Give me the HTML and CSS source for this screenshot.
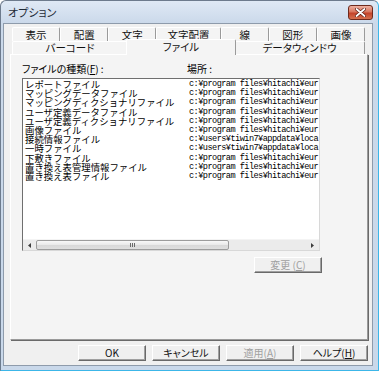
FILE: index.html
```html
<!DOCTYPE html>
<html lang="ja">
<head>
    <meta charset="UTF-8">
    <title>オプション</title>
    <link rel="stylesheet" href="styles.css">
</head>
<body>

<div class="window">
    <div class="titlebar">
        <span class="title">オプション</span>
        <span class="close">
            <svg width="11" height="9" viewBox="0 0 11 9">
                <path d="M1.5 1 L9.5 8 M9.5 1 L1.5 8" stroke="#5a1a10" stroke-width="3.2" stroke-linecap="round"/>
                <path d="M1.5 1 L9.5 8 M9.5 1 L1.5 8" stroke="#fff" stroke-width="1.8" stroke-linecap="round"/>
            </svg>
        </span>
    </div>

    <div class="client">
        <div class="tabrow back">
            <div class="tab">表示</div>
            <div class="tab">配置</div>
            <div class="tab">文字</div>
            <div class="tab wide">文字配置</div>
            <div class="tab">線</div>
            <div class="tab">図形</div>
            <div class="tab">画像</div>
        </div>
        <div class="tabrow front">
            <div class="tab barcode">バーコード</div>
            <div class="tab file current">ファイル</div>
            <div class="tab datawin">データウィンドウ</div>
        </div>

        <div class="panel">
            <div class="labels">
                <span class="lbl-type">ファイルの種類(<u>F</u>) :</span>
                <span class="lbl-loc">場所 :</span>
            </div>
            <div class="listbox">
                <div class="rows">
                    <div class="row"><span class="name">レポートファイル</span><span class="path">c:¥program files¥hitachi¥eur</span></div>
                    <div class="row"><span class="name">マッピングデータファイル</span><span class="path">c:¥program files¥hitachi¥eur</span></div>
                    <div class="row"><span class="name">マッピングディクショナリファイル</span><span class="path">c:¥program files¥hitachi¥eur</span></div>
                    <div class="row"><span class="name">ユーザ定義データファイル</span><span class="path">c:¥program files¥hitachi¥eur</span></div>
                    <div class="row"><span class="name">ユーザ定義ディクショナリファイル</span><span class="path">c:¥program files¥hitachi¥eur</span></div>
                    <div class="row"><span class="name">画像ファイル</span><span class="path">c:¥program files¥hitachi¥eur</span></div>
                    <div class="row"><span class="name">接続情報ファイル</span><span class="path">c:¥users¥tiwin7¥appdata¥loca</span></div>
                    <div class="row"><span class="name">一時ファイル</span><span class="path">c:¥users¥tiwin7¥appdata¥loca</span></div>
                    <div class="row"><span class="name">下敷きファイル</span><span class="path">c:¥program files¥hitachi¥eur</span></div>
                    <div class="row"><span class="name">置き換え表管理情報ファイル</span><span class="path">c:¥program files¥hitachi¥eur</span></div>
                    <div class="row"><span class="name">置き換え表ファイル</span><span class="path">c:¥program files¥hitachi¥eur</span></div>
                </div>
                <div class="hscroll">
                    <span class="arrow">
                        <svg width="3" height="5" viewBox="0 0 3 5"><path d="M3 0 L0 2.5 L3 5 Z" fill="#3c3c3c"/></svg>
                    </span>
                    <span class="thumb"><span class="grip"></span></span>
                    <span class="track"></span>
                    <span class="arrow">
                        <svg width="3" height="5" viewBox="0 0 3 5"><path d="M0 0 L3 2.5 L0 5 Z" fill="#3c3c3c"/></svg>
                    </span>
                </div>
            </div>
            <div class="change-row">
                <button class="btn disabled">変更 (<u>C</u>)</button>
            </div>
        </div>

        <div class="buttons">
            <button class="btn">OK</button>
            <button class="btn">キャンセル</button>
            <button class="btn disabled">適用(<u>A</u>)</button>
            <button class="btn">ヘルプ(<u>H</u>)</button>
        </div>
    </div>
</div>

</body>
</html>
```

FILE: styles.css
```css
* {
    margin: 0;
    padding: 0;
    box-sizing: border-box;
}
body {
    background: #fff;
    font-family: "Noto Sans CJK JP", sans-serif;
    color: #000;
}
u {
    text-decoration: underline;
    text-underline-offset: 1px;
}

/* 窓枠 */
.window {
    width: 379px;
    height: 371px;
    display: flex;
    flex-direction: column;
    border: 1px solid #6d7b8d;
    border-right-color: #3cb6e8;
    border-bottom-color: #3cb6e8;
    border-radius: 6px 6px 0 0;
    background: linear-gradient(#dfe9f5, #cbd9ea 22px, #c9d8ea);
    overflow: hidden;
}
.titlebar {
    height: 22px;
    display: flex;
    align-items: center;
    justify-content: space-between;
    padding: 0 5px 0 7px;
}
.title {
    font-size: 11px;
    color: #1e2a36;
    font-feature-settings: "palt";
}
.close {
    width: 25px;
    height: 15px;
    display: flex;
    align-items: center;
    justify-content: center;
    border: 1px solid #6e2a1d;
    border-radius: 3px;
    background: linear-gradient(#eeb1a2, #d8765e 45%, #c4432a 55%, #d5714f);
}

.client {
    flex: 1;
    display: flex;
    flex-direction: column;
    margin: 0 5px 4px 2px;
    padding: 3px 4px 4px 6px;
    border: 1px solid #8e9bab;
    background: #f0f0f0;
}

/* タブ */
.tabrow {
    display: flex;
    margin: 0 3px 0 2px;
    font-size: 10.5px;
    line-height: 12px;
    font-feature-settings: "palt";
}
.tab {
    display: flex;
    align-items: center;
    justify-content: center;
    border-top: 1px solid #fff;
    border-left: 1px solid #fff;
    border-right: 1px solid #9a9a9a;
    border-radius: 2px 2px 0 0;
    background: #f4f4f4;
    color: #111;
}
.back {
    height: 14px;
}
.back .tab {
    flex: 1;
}
.back .tab.wide {
    flex: 1.35;
}
.front {
    height: 13px;
    position: relative;
    z-index: 1;
}
.barcode {
    width: 116px;
}
.file {
    width: 106px;
}
.datawin {
    width: 131px;
}
.current {
    margin: -2px -2px 0;
    width: 110px;
    height: 16px;
    padding-bottom: 2px;
    background: #f4f4f4;
    position: relative;
}

.panel {
    height: 286px;
    display: flex;
    flex-direction: column;
    padding: 9px 0 0 11px;
    border-top: 1px solid #fff;
    border-left: 1px solid #fff;
    border-right: 1px solid #9a9a9a;
    border-bottom: 1px solid #9a9a9a;
    box-shadow: 1px 1px 0 #6a6a6a;
    background: #f4f4f4;
    font-size: 10px;
}
.labels {
    display: flex;
    height: 10px;
    line-height: 10px;
    margin-bottom: 4px;
    font-feature-settings: "palt";
}
.lbl-type {
    width: 165px;
}

.listbox {
    width: 298px;
    height: 173px;
    display: flex;
    flex-direction: column;
    border-top: 1px solid #6f6f6f;
    border-left: 1px solid #6f6f6f;
    border-right: 1px solid #d8d8d8;
    border-bottom: 1px solid #d8d8d8;
    background: #fff;
}
.rows {
    flex: 1;
    padding: 1px 0 0 2px;
}
.row {
    display: flex;
    height: 9.2px;
    line-height: 9.2px;
    white-space: nowrap;
}
.name {
    width: 164px;
    font-size: 9.4px;
}
.path {
    font-family: "Liberation Mono", monospace;
    font-size: 8.6px;
    letter-spacing: -0.55px;
}

.hscroll {
    height: 11px;
    display: flex;
    background: #ebebeb;
    border-top: 1px solid #f4f4f4;
}
.arrow {
    width: 13px;
    display: flex;
    align-items: center;
    justify-content: center;
}
.thumb {
    width: 193px;
    display: flex;
    align-items: center;
    justify-content: center;
    border: 1px solid #9c9c9c;
    border-radius: 2px;
    background: linear-gradient(#f8f8f8, #e8e8e8 50%, #d8d8d8 51%, #dedede);
}
.grip {
    width: 5px;
    height: 4px;
    background: repeating-linear-gradient(90deg, #6a6a6a 0 1px, transparent 1px 2px);
}
.track {
    flex: 1;
}

.change-row {
    display: flex;
    justify-content: flex-end;
    width: 300px;
    margin-top: 6px;
}

/* ボタン */
.btn {
    width: 68px;
    height: 16px;
    font-family: "Noto Sans CJK JP", sans-serif;
    font-size: 10px;
    font-feature-settings: "palt";
    line-height: 12px;
    color: #111;
    background: #f0f0f0;
    border-top: 1px solid #fff;
    border-left: 1px solid #fff;
    border-right: 1px solid #696969;
    border-bottom: 1px solid #696969;
    box-shadow: inset -1px -1px 0 #a0a0a0;
}
.btn.disabled {
    color: #a0a0a0;
}
.buttons {
    display: flex;
    justify-content: flex-end;
    gap: 6px;
    margin-top: 5px;
}
```
